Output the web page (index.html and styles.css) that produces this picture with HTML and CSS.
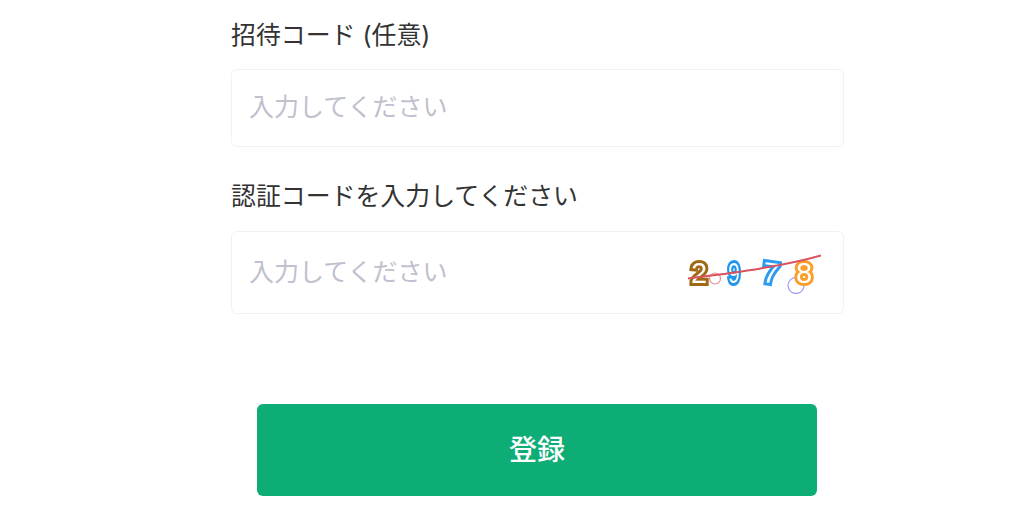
FILE: index.html
```html
<!DOCTYPE html>
<html lang="ja">
<head>
    <meta charset="UTF-8">
    <title>登録</title>
    <link rel="stylesheet" href="styles.css">
</head>
<body>
    <form class="form">
        <label class="label label-first">招待コード (任意)</label>
        <div class="field field-invite">
            <input class="input" type="text" placeholder="入力してください">
        </div>
        <label class="label label-second">認証コードを入力してください</label>
        <div class="field field-code">
            <input class="input" type="text" placeholder="入力してください">
            <svg class="captcha" width="140" height="50" viewBox="0 0 140 50">
                <circle cx="34" cy="30.5" r="5.5" fill="none" stroke="#e58f9c" stroke-width="1.2"/>
                <circle cx="115" cy="37.5" r="8" fill="none" stroke="#a5a5f5" stroke-width="1.3"/>
                <g class="digits">
                    <text x="18" y="35" stroke="#a06a14">2</text>
                    <text stroke="#1f95ee" transform="translate(53 35) scale(0.72 1)">9</text>
                    <text x="90" y="35" stroke="#2c9cf2" transform="rotate(8 90 25)">7</text>
                    <text x="123" y="35" stroke="#fb9f2c">8</text>
                </g>
                <path d="M7 30.5 C50 25 100 19 140 7.5" fill="none" stroke="#d9525e" stroke-width="2"/>
            </svg>
        </div>
        <div class="actions">
            <button class="submit" type="button">登録</button>
        </div>
    </form>
</body>
</html>
```
FILE: styles.css
```css
* {
    box-sizing: border-box;
}
body {
    margin: 0;
    height: 520px;
    overflow: hidden;
    background-color: #ffffff;
    font-family: Inter, "Noto Sans CJK JP", sans-serif;
}
.form {
    width: 613px;
    margin-left: 231px;
}
.label {
    display: block;
    font-size: 24.9px;
    line-height: 34px;
    color: #333333;
}
.label-first {
    padding-top: 18px;
    margin-bottom: 17px;
}
.label-second {
    margin-top: 32px;
    margin-bottom: 18px;
}
.field {
    display: flex;
    align-items: center;
    padding: 0 17px;
    border: 1px solid #f2f2f4;
    border-radius: 6px;
}
.field-invite {
    height: 78px;
}
.field-code {
    height: 83px;
    padding-right: 22px;
}
.input {
    flex: 1;
    min-width: 0;
    border: none;
    outline: none;
    padding: 0 0 2px;
    font-family: inherit;
    font-size: 25px;
    color: #333333;
}
.input::placeholder {
    color: #c0c0ce;
}
.captcha {
    flex-shrink: 0;
    filter: blur(0.4px);
}
.digits {
    font-family: "Liberation Sans", sans-serif;
    font-size: 29px;
    fill: #ffffff;
    stroke-width: 6;
    paint-order: stroke;
    text-anchor: middle;
}
.actions {
    display: flex;
    padding-left: 26px;
    margin-top: 90px;
}
.submit {
    width: 560px;
    height: 92px;
    padding: 0 0 5px;
    border: none;
    border-radius: 6px;
    background-color: #0fad76;
    color: #ffffff;
    font-family: inherit;
    font-size: 28px;
    font-weight: 500;
    cursor: pointer;
}
```
